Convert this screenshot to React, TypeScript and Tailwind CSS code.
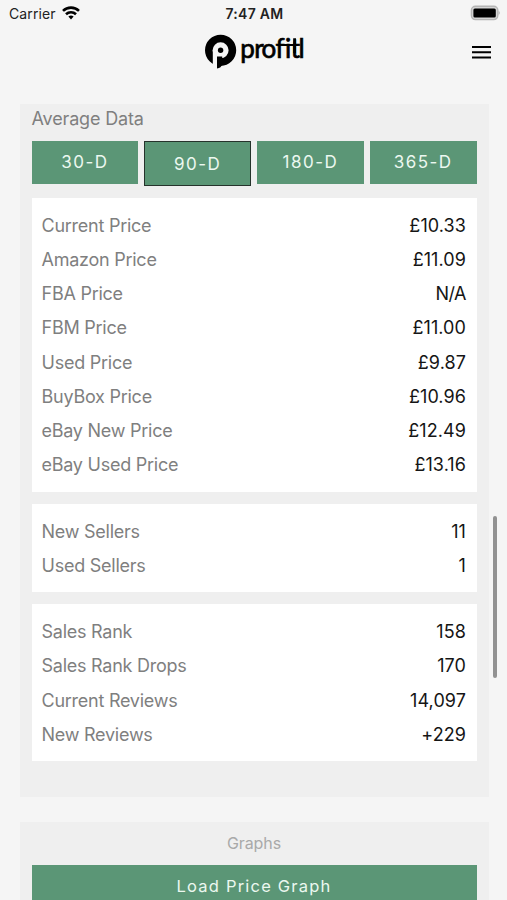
import React from "react";

type Row = [label: string, value: string];

const prices: Row[] = [
  ["Current Price", "£10.33"],
  ["Amazon Price", "£11.09"],
  ["FBA Price", "N/A"],
  ["FBM Price", "£11.00"],
  ["Used Price", "£9.87"],
  ["BuyBox Price", "£10.96"],
  ["eBay New Price", "£12.49"],
  ["eBay Used Price", "£13.16"],
];
const sellers: Row[] = [
  ["New Sellers", "11"],
  ["Used Sellers", "1"],
];
const ranks: Row[] = [
  ["Sales Rank", "158"],
  ["Sales Rank Drops", "170"],
  ["Current Reviews", "14,097"],
  ["New Reviews", "+229"],
];

function Card({ rows }: { rows: Row[] }) {
  return (
    <div className="bg-white pt-[10.3px] pr-[10.5px] pb-[9.9px] pl-[10px]">
      {rows.map(([label, value]) => (
        <div key={label} className="flex h-[34.2px] items-center justify-between text-[18px] tracking-[-0.25px]">
          <span className="text-[#7f7f7f]">{label}</span>
          <span className={value === "N/A" ? "tracking-[-0.5px] text-[#151515]" : "tracking-[0.08px] text-[#151515]"}>
            {value}
          </span>
        </div>
      ))}
    </div>
  );
}

function StatusBar() {
  return (
    <div className="grid h-[28px] grid-cols-3 items-center pr-[7px] pl-[9px] text-[14px] text-[#222]">
      <div className="flex items-center gap-[6px] pb-[1px]">
        <span className="tracking-[0.1px]">Carrier</span>
        <svg className="mb-[1px]" width="18" height="14" viewBox="0 0 18 14" fill="none" stroke="#000" strokeWidth="2.6">
          <path d="M1 4.9a11.5 11.5 0 0 1 16 0" />
          <path d="M4 8.2a7.2 7.2 0 0 1 10 0" />
          <path d="M6.4 10.6a3.8 3.8 0 0 1 5.2 0L9 13.4z" fill="#000" stroke="none" />
        </svg>
      </div>
      <span className="pb-[1px] text-center font-semibold tracking-[0.3px]">7:47 AM</span>
      <svg className="mb-[2px] justify-self-end" width="30" height="16" viewBox="0 0 30 16">
        <rect x="1.4" y="1.2" width="26.4" height="13.4" rx="4" fill="#d5d5d5" stroke="#b5b5b5" strokeWidth="1.4" />
        <rect x="3.4" y="3.4" width="22.4" height="9" rx="1.5" fill="#000" />
        <path d="M28.7 5.7q2 2.2 0 4.4z" fill="#aaa" />
      </svg>
    </div>
  );
}

function Header() {
  return (
    <header className="grid h-[76px] grid-cols-[1fr_auto_1fr] items-start px-[16px] pt-[6px]">
      <span />
      <div className="flex items-start">
        <svg width="36" height="37" viewBox="0 0 36 37">
          <circle cx="16.6" cy="16.3" r="11.8" fill="none" stroke="#000" strokeWidth="7.6" />
          <path d="M8.8 16h4.2v20H8.8z" fill="#f5f5f5" />
          <path d="M13 22.5h5.2v7.7q-.9 3.6-5.2 4.4z" fill="#000" />
          <circle cx="16.6" cy="16.3" r="2.7" fill="#000" />
        </svg>
        <svg width="64" height="37" viewBox="0 0 64 37" className="overflow-visible">
          <text
            x="0.2 14.2 21.6 35.6 45 50.8 58.4"
            y="23.6"
            stroke="#000"
            strokeWidth="0.7"
            className="fill-black [font-family:Lato,sans-serif] text-[26px]"
          >
            profitl
          </text>
          <path d="M53.2 4.2h2.8v15h-2.8zM37.5 9.9h21v2.1h-21z" />
        </svg>
      </div>
      <svg className="mt-[11px] justify-self-end" width="19" height="15" viewBox="0 0 19 15" fill="#000">
        <path d="M0 1h19v2H0zM0 6.2h19v2H0zM0 11.4h19v2H0z" />
      </svg>
    </header>
  );
}

const ranges = ["30-D", "90-D", "180-D", "365-D"];

export default function App() {
  return (
    <div className="relative h-[900px] w-[507px] overflow-hidden bg-[#f5f5f5] [font-family:Inter,sans-serif]">
      <StatusBar />
      <Header />
      <main className="flex flex-col gap-[25px] pr-[18px] pl-[20px]">
        <section className="h-[693px] bg-[#efefef] pr-[12.5px] pl-[11.5px]">
          <h2 className="h-[37px] pt-[1px] text-[18px] leading-[27px] tracking-[-0.15px] text-[#7f7f7f]">Average Data</h2>
          <div className="mb-[14.5px] grid h-[42.5px] grid-cols-4 gap-[6px]">
            {ranges.map((r) => (
              <button
                key={r}
                className={
                  r === "90-D"
                    ? "h-[45px] border-[1.5px] border-[#26332c] bg-[#5b9676] pt-[2px] text-[17px] tracking-[1.5px] text-[#ecf8f0]"
                    : "h-[42.5px] bg-[#5b9676] pt-[1px] text-[17px] tracking-[1.5px] text-[#ecf8f0]"
                }
              >
                {r}
              </button>
            ))}
          </div>
          <div className="flex flex-col gap-[12px]">
            <Card rows={prices} />
            <Card rows={sellers} />
            <Card rows={ranks} />
          </div>
        </section>
        <section className="h-[100px] bg-[#efefef] pr-[12.5px] pl-[11.5px]">
          <h2 className="h-[43px] text-center text-[16px] leading-[43px] tracking-[-0.1px] text-[#a9a9a9]">Graphs</h2>
          <button className="h-[43px] w-full bg-[#5b9676] text-[16.5px] tracking-[1.2px] text-[#ecf8f0]">Load Price Graph</button>
        </section>
      </main>
      <div className="absolute top-[516px] right-[10px] h-[162px] w-[4px] rounded-full bg-[#929292]" />
    </div>
  );
}
